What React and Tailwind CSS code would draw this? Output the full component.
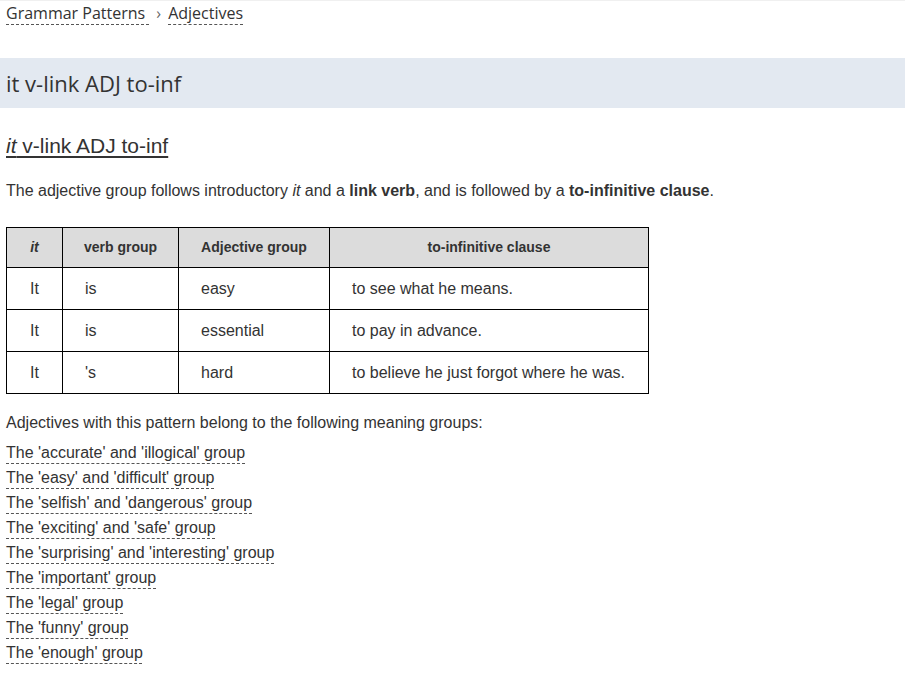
import React from "react";

const rows = [
  { it: "It", verb: "is", adj: "easy", inf: "to see what he means." },
  { it: "It", verb: "is", adj: "essential", inf: "to pay in advance." },
  { it: "It", verb: "'s", adj: "hard", inf: "to believe he just forgot where he was." },
];

const groups = [
  "The 'accurate' and 'illogical' group",
  "The 'easy' and 'difficult' group",
  "The 'selfish' and 'dangerous' group",
  "The 'exciting' and 'safe' group",
  "The 'surprising' and 'interesting' group",
  "The 'important' group",
  "The 'legal' group",
  "The 'funny' group",
  "The 'enough' group",
];

const dashed = "underline decoration-dashed decoration-1 underline-offset-[5px] decoration-[#555]";

export default function App() {
  return (
    <div className="min-h-[674px] bg-white border-t border-[#f0f0f0] text-[#333] font-['Liberation_Sans',Arial,sans-serif]">
      <nav className="flex items-center h-[24px] px-[6px] text-[16px] font-['Open_Sans',sans-serif]">
        <a className={dashed}>Grammar Patterns&nbsp;</a>
        <span className="mx-[7px] text-[16px] text-[#666]">›</span>
        <a className={dashed}>Adjectives</a>
      </nav>

      <div className="mt-[33px] h-[50px] bg-[#e3e9f1] flex items-center px-[6px]">
        <h1 className="text-[22px] font-['Open_Sans',sans-serif] text-[#333]">it v-link ADJ to-inf</h1>
      </div>

      <div className="px-[6px]">
        <h2 className="mt-[24px] text-[21px] leading-[28px] underline underline-offset-[3px]">
          <i>it</i> v-link ADJ to-inf
        </h2>

        <p className="mt-[20px] text-[16px] leading-[22px]">
          The adjective group follows introductory <i>it</i> and a <b>link verb</b>, and is followed by a{" "}
          <b>to-infinitive clause</b>.
        </p>

        <table className="mt-[25px] border-collapse text-[16px]">
          <thead>
            <tr className="bg-[#dcdcdc] h-[40px] text-[14px] font-bold">
              <th className="border border-black w-[56px] italic">it</th>
              <th className="border border-black w-[116px]">verb group</th>
              <th className="border border-black w-[151px]">Adjective group</th>
              <th className="border border-black w-[319px]">to-infinitive clause</th>
            </tr>
          </thead>
          <tbody>
            {rows.map((r, i) => (
              <tr key={i} className="h-[42px]">
                <td className="border border-black text-center">{r.it}</td>
                <td className="border border-black pl-[22px]">{r.verb}</td>
                <td className="border border-black pl-[22px]">{r.adj}</td>
                <td className="border border-black pl-[22px]">{r.inf}</td>
              </tr>
            ))}
          </tbody>
        </table>

        <p className="mt-[18px] text-[16px] leading-[22px]">
          Adjectives with this pattern belong to the following meaning groups:
        </p>
        <ul className="mt-[6px] flex flex-col text-[16px] leading-[25px]">
          {groups.map((g) => (
            <li key={g}>
              <a className={dashed}>{g}</a>
            </li>
          ))}
        </ul>
      </div>
    </div>
  );
}
